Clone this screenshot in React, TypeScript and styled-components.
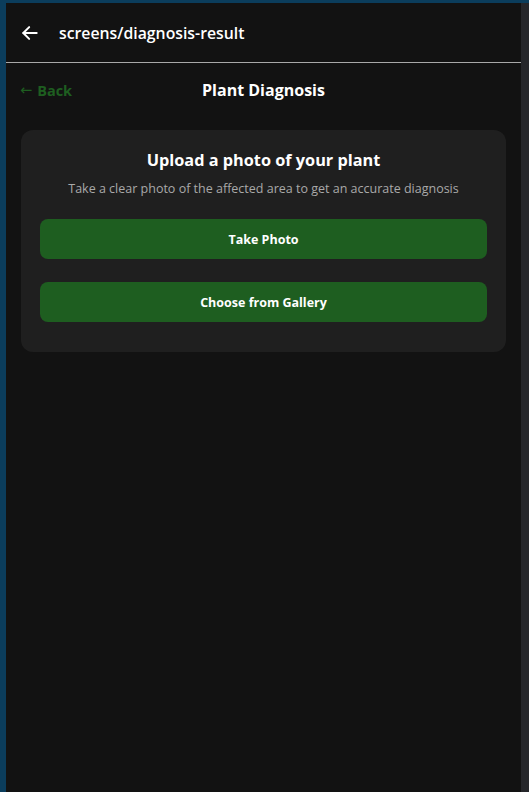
import React from 'react';
import styled, { createGlobalStyle } from 'styled-components';

const GlobalStyle = createGlobalStyle`
  html, body {
    margin: 0;
    padding: 0;
    height: 100%;
    background: #0b3d5c;
  }
  #root {
    height: 100%;
  }
  * {
    box-sizing: border-box;
  }
`;

const Frame = styled.div`
  display: flex;
  height: 792px;
  padding: 3px 0 0 6px;
  background: #0b3d5c;
  font-family: "Open Sans", "Noto Sans", sans-serif;
`;

const Screen = styled.div`
  flex: 1;
  display: flex;
  flex-direction: column;
  background: #121212;
`;

const Scrollbar = styled.div`
  width: 8px;
  background: #25262a;
`;

const Header = styled.header`
  display: flex;
  align-items: center;
  gap: 17px;
  height: 60px;
  padding: 0 0 0 12px;
  border-bottom: 1px solid #a8a8a8;
`;

const HeaderTitle = styled.h1`
  margin: 0;
  color: #ffffff;
  font-size: 15.8px;
  font-weight: 600;
`;

const IconButton = styled.button`
  display: flex;
  align-items: center;
  justify-content: center;
  width: 24px;
  height: 24px;
  padding: 0;
  border: 0;
  background: transparent;
  color: #ffffff;
`;

const NavRow = styled.div`
  display: grid;
  grid-template-columns: 1fr auto 1fr;
  align-items: center;
  padding: 7px 14px 0 14px;
  height: 47px;
`;

const BackLink = styled.span`
  display: flex;
  align-items: center;
  gap: 5px;
  color: #1e5e20;
  font-size: 14.5px;
  font-weight: 700;
`;

const BackArrow = styled.span`
  font-family: "DejaVu Sans", sans-serif;
  font-weight: 400;
  font-size: 14.5px;
`;

const NavTitle = styled.h2`
  margin: 0;
  color: #ffffff;
  font-size: 16px;
  font-weight: 700;
`;

const Card = styled.section`
  margin: 20px 15px 0 15px;
  padding: 19px 19px 30px 19px;
  background: #1f1f1f;
  border-radius: 12px;
  display: flex;
  flex-direction: column;
  align-items: stretch;
`;

const CardTitle = styled.h3`
  margin: 0;
  text-align: center;
  color: #ffffff;
  font-size: 16.3px;
  font-weight: 700;
  line-height: 23px;
`;

const CardText = styled.p`
  margin: 8px 0 21px 0;
  text-align: center;
  color: #a9a9a9;
  font-size: 12.5px;
  line-height: 18px;
`;

const PrimaryButton = styled.button<{ $spaced?: boolean }>`
  height: 40px;
  margin-top: ${(p) => (p.$spaced ? '23px' : '0')};
  border: 0;
  border-radius: 8px;
  background: #1e5e20;
  color: #ffffff;
  font-family: inherit;
  font-size: 12.5px;
  font-weight: 700;
`;

export default function App() {
  return (
    <>
      <GlobalStyle />
      <Frame>
        <Screen>
          <Header>
            <IconButton aria-label="back">
              <svg width="20" height="20" viewBox="0 0 24 24" fill="none" stroke="currentColor" strokeWidth="2.4" strokeLinecap="round" strokeLinejoin="round">
                <path d="M20 12H4" />
                <path d="M11 5l-7 7 7 7" />
              </svg>
            </IconButton>
            <HeaderTitle>screens/diagnosis-result</HeaderTitle>
          </Header>
          <NavRow>
            <BackLink>
              <BackArrow>←</BackArrow>Back
            </BackLink>
            <NavTitle>Plant Diagnosis</NavTitle>
            <span />
          </NavRow>
          <Card>
            <CardTitle>Upload a photo of your plant</CardTitle>
            <CardText>Take a clear photo of the affected area to get an accurate diagnosis</CardText>
            <PrimaryButton>Take Photo</PrimaryButton>
            <PrimaryButton $spaced>Choose from Gallery</PrimaryButton>
          </Card>
        </Screen>
        <Scrollbar />
      </Frame>
    </>
  );
}
